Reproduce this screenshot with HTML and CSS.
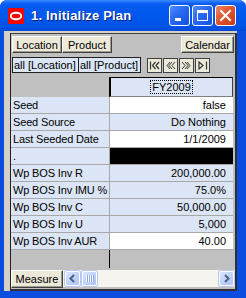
FILE: index.html
```html
<!DOCTYPE html>
<html lang="en">

<head>
    <meta charset="UTF-8">
    <title>1. Initialize Plan</title>
    <link rel="stylesheet" href="styles.css">
</head>

<body>

    <div class="window">
        <div class="titlebar">
            <span class="app-icon">
                <svg width="16" height="16" viewBox="0 0 16 16"><rect width="16" height="16" fill="#f00"/><ellipse cx="8" cy="8" rx="5.2" ry="3.3" fill="none" stroke="#fff" stroke-width="2"/></svg>
            </span>
            <span class="title">1. Initialize Plan</span>
            <div class="title-buttons">
                <span class="tbtn">
                    <svg width="19" height="19" viewBox="0 0 19 19"><rect x="5" y="12" width="6" height="3" fill="#fff"/></svg>
                </span>
                <span class="tbtn">
                    <svg width="19" height="19" viewBox="0 0 19 19"><rect x="4.5" y="4.5" width="10" height="10" fill="none" stroke="#fff"/><rect x="4" y="4" width="11" height="3" fill="#fff"/></svg>
                </span>
                <span class="tbtn close">
                    <svg width="19" height="19" viewBox="0 0 19 19"><path d="M5 5 L14 14 M14 5 L5 14" stroke="#fff" stroke-width="2" stroke-linecap="square"/></svg>
                </span>
            </div>
        </div>

        <div class="client">
            <div class="panel">
                <div class="toolbar">
                    <button class="btn">Location</button>
                    <button class="btn">Product</button>
                    <button class="btn calendar">Calendar</button>
                </div>

                <div class="pagebar">
                    <span class="dim loc">all [Location]</span>
                    <span class="dim prod">all [Product]</span>
                    <div class="nav">
                        <span class="nav-btn"><svg width="13" height="13" viewBox="0 0 13 13"><path d="M2.5 2.5 V10.5 M7.5 3 L4.5 6.5 L7.5 10 M11 3 L8 6.5 L11 10" fill="none" stroke="#333" stroke-width="1.2"/></svg></span>
                        <span class="nav-btn"><svg width="13" height="13" viewBox="0 0 13 13"><path d="M6 3 L3 6.5 L6 10 M8 3 L5 6.5 L8 10 M11 3 L8 6.5 L11 10" fill="none" stroke="#333" stroke-width="1"/></svg></span>
                        <span class="nav-btn"><svg width="13" height="13" viewBox="0 0 13 13"><path d="M2 3 L5 6.5 L2 10 M5 3 L8 6.5 L5 10 M7 3 L10 6.5 L7 10" fill="none" stroke="#333" stroke-width="1"/></svg></span>
                        <span class="nav-btn"><svg width="13" height="13" viewBox="0 0 13 13"><path d="M3 3 L7 6.5 L3 10 Z M10.5 2.5 V10.5" fill="none" stroke="#333" stroke-width="1.2"/></svg></span>
                    </div>
                </div>

                <div class="grid">
                    <div class="corner"></div>
                    <div class="col-head"><span class="focus">FY2009</span></div>
                    <div class="edge"></div>

                    <div class="label">Seed</div>
                    <div class="value white">false</div>
                    <div class="edge"></div>

                    <div class="label">Seed Source</div>
                    <div class="value">Do Nothing</div>
                    <div class="edge"></div>

                    <div class="label">Last Seeded Date</div>
                    <div class="value white">1/1/2009</div>
                    <div class="edge"></div>

                    <div class="label">.</div>
                    <div class="value black"></div>
                    <div class="edge"></div>

                    <div class="label">Wp BOS Inv R</div>
                    <div class="value">200,000.00</div>
                    <div class="edge"></div>

                    <div class="label">Wp BOS Inv IMU %</div>
                    <div class="value">75.0%</div>
                    <div class="edge"></div>

                    <div class="label">Wp BOS Inv C</div>
                    <div class="value">50,000.00</div>
                    <div class="edge"></div>

                    <div class="label">Wp BOS Inv U</div>
                    <div class="value">5,000</div>
                    <div class="edge"></div>

                    <div class="label">Wp BOS Inv AUR</div>
                    <div class="value white">40.00</div>
                    <div class="edge"></div>

                    <div class="fill-left"></div>
                    <div class="fill-right"></div>
                    <div class="edge"></div>
                </div>

                <div class="bottombar">
                    <button class="btn measure">Measure</button>
                    <div class="hscroll">
                        <span class="sb-btn"><svg width="13" height="13" viewBox="0 0 13 13"><path d="M8 3 L4.5 6.5 L8 10" fill="none" stroke="#4d6185" stroke-width="2"/></svg></span>
                        <span class="sb-thumb"><svg width="9" height="7" viewBox="0 0 9 7"><path d="M1.5 0 V7 M3.5 0 V7 M5.5 0 V7 M7.5 0 V7" stroke="#fff" stroke-width="1"/><path d="M2.5 0 V7 M4.5 0 V7 M6.5 0 V7 M8.5 0 V7" stroke="#8caae6" stroke-width="1"/></svg></span>
                        <span class="sb-track"></span>
                        <span class="sb-btn"><svg width="13" height="13" viewBox="0 0 13 13"><path d="M5 3 L8.5 6.5 L5 10" fill="none" stroke="#4d6185" stroke-width="2"/></svg></span>
                    </div>
                </div>
            </div>
        </div>
    </div>

</body>

</html>
```

FILE: styles.css
```css
body {
    margin: 0;
    padding: 0;
    background-color: #fff;
    font-family: "Liberation Sans", Arial, sans-serif;
    font-size: 11px;
}

.window {
    width: 246px;
    height: 298px;
    display: flex;
    flex-direction: column;
    background-color: #0a4ddf;
    border-radius: 7px 7px 0 0;
    overflow: hidden;
}

.titlebar {
    height: 31px;
    display: flex;
    align-items: center;
    padding: 0 10px 0 8px;
    background: linear-gradient(#3d8bff 0%, #0a5cf2 12%, #0058ee 45%, #0054e6 85%, #0048d8 100%);
}

.app-icon {
    display: flex;
    margin-right: 7px;
}

.title {
    color: #fff;
    font-weight: bold;
    font-size: 13px;
    letter-spacing: 0.2px;
    text-shadow: 1px 1px #0a1f7a;
}

.title-buttons {
    margin-left: auto;
    display: flex;
    gap: 2px;
}

.tbtn {
    width: 19px;
    height: 19px;
    border: 1px solid #fff;
    border-radius: 3px;
    display: flex;
    background: linear-gradient(135deg, #4f8cff 0%, #2a68f0 45%, #1450e0 100%);
}

.tbtn.close {
    background: linear-gradient(135deg, #f08a64 0%, #e0552f 45%, #c8391a 100%);
}

.client {
    flex: 1;
    display: flex;
    margin: 0 9px 7px 4px;
    padding: 2px 0 0 6px;
    background-color: #d4d0c8;
}

.panel {
    flex: 1;
    display: flex;
    flex-direction: column;
    background-color: #c0c0c0;
    border-top: 1px solid #404040;
    border-left: 1px solid #202020;
    border-right: 2px solid #303030;
    border-bottom: 2px solid #303030;
}

.btn {
    font-family: "Liberation Sans", Arial, sans-serif;
    font-size: 11px;
    color: #000;
    height: 17px;
    padding: 0;
    background-color: #ece9d8;
    border: 1px solid;
    border-color: #fff #404040 #404040 #fff;
    box-shadow: inset -1px -1px 0 #a09c90;
}

.toolbar {
    height: 21px;
    display: flex;
    padding: 2px 1px 0 1px;
    box-sizing: border-box;
}

.toolbar .btn {
    width: 50px;
}

.toolbar .calendar {
    width: 53px;
    margin-left: auto;
}

.pagebar {
    height: 22px;
    display: flex;
    align-items: flex-start;
    padding: 2px 0 0 1px;
    box-sizing: border-box;
}

.dim {
    height: 16px;
    line-height: 14px;
    box-sizing: border-box;
    padding-left: 1px;
    background-color: #dbe5f5;
    border: 1px solid #202020;
    white-space: nowrap;
    overflow: hidden;
}

.dim.loc {
    width: 67px;
}

.dim.prod {
    width: 62px;
    border-left: none;
}

.nav {
    display: flex;
    gap: 1px;
    margin-left: 6px;
    margin-top: 1px;
}

.nav-btn {
    width: 13px;
    height: 13px;
    display: flex;
    background-color: #ece9d8;
    border: 1px solid #404040;
}

.grid {
    display: grid;
    grid-template-columns: 99px 123px 1fr;
    grid-template-rows: 20px repeat(9, 17px) 1fr;
    flex: 1;
}

.corner {
    background-color: #c0c0c0;
}

.col-head {
    background-color: #dbe5f5;
    border-top: 1px solid #000;
    border-left: 2px solid #000;
    border-right: 1px solid #404040;
    border-bottom: 1px solid #808080;
    margin-left: -1px;
    display: flex;
    align-items: center;
    justify-content: center;
}

.focus {
    outline: 1px dotted #000;
    line-height: 12px;
    padding: 0 1px;
}

.label,
.value {
    line-height: 16px;
    border-bottom: 1px solid #a8a8a8;
    white-space: nowrap;
    overflow: hidden;
}

.label {
    padding-left: 2px;
    letter-spacing: -0.15px;
    background-color: #dbe5f5;
    border-right: 1px solid #a8a8a8;
}

.value {
    text-align: right;
    padding-right: 7px;
    background-color: #dbe5f5;
}

.value.white {
    background-color: #fff;
}

.value.black {
    background-color: #000;
}

.edge {
    background-color: #c0c0c0;
}

.fill-left {
    border-right: 1px solid #000;
}

.bottombar {
    height: 21px;
    display: flex;
    align-items: center;
}

.measure {
    width: 52px;
    height: 18px;
}

.hscroll {
    flex: 1;
    height: 17px;
    display: flex;
    align-items: center;
    gap: 1px;
    padding: 0 1px 0 2px;
    background-color: #f5f4ef;
}

.sb-btn,
.sb-thumb {
    height: 15px;
    box-sizing: border-box;
    display: flex;
    align-items: center;
    justify-content: center;
    border: 1px solid #fff;
    border-radius: 2px;
    background: linear-gradient(135deg, #dbe6fe 0%, #c1d3fb 50%, #b0c6f6 100%);
    box-shadow: 0 0 0 1px #b7c9f2;
}

.sb-btn {
    width: 15px;
}

.sb-thumb {
    width: 15px;
    margin-left: 1px;
}

.sb-track {
    flex: 1;
}
```
